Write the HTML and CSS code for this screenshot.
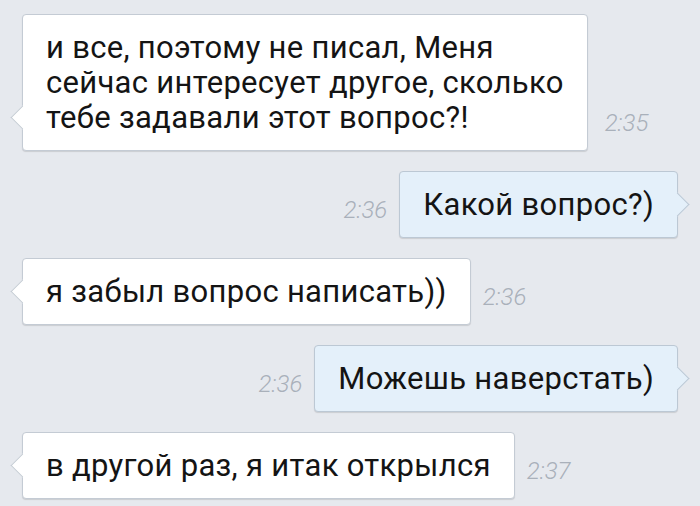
FILE: index.html
```html
<!DOCTYPE html>
<html lang="ru">
<head>
  <meta charset="UTF-8">
  <title>Диалог</title>
  <link rel="stylesheet" href="styles.css">
</head>
<body>
  <div class="chat">
    <!-- incoming -->
    <div class="row in">
      <div class="bubble">и все, поэтому не писал, Меня<br>сейчас интересует другое, сколько<br>тебе задавали этот вопрос?!</div>
      <span class="time t1">2:35</span>
    </div>

    <div class="row out">
      <span class="time">2:36</span>
      <div class="bubble">Какой вопрос?)</div>
    </div>

    <div class="row in">
      <div class="bubble">я забыл вопрос написать))</div>
      <span class="time">2:36</span>
    </div>

    <div class="row out">
      <span class="time">2:36</span>
      <div class="bubble">Можешь наверстать)</div>
    </div>

    <div class="row in">
      <div class="bubble">в другой раз, я итак открылся</div>
      <span class="time">2:37</span>
    </div>
  </div>
</body>
</html>
```

FILE: styles.css
```css
html, body {
  margin: 0;
  padding: 0;
  background-color: #e6e9ee;
}
body {
  font-family: Roboto, "Noto Sans", sans-serif;
  width: 700px;
  height: 506px;
  overflow: hidden;
}
.chat {
  display: flex;
  flex-direction: column;
  gap: 20px;
  padding: 14px 22px 0 22px;
}
.row {
  display: flex;
  align-items: flex-end;
  gap: 12px;
}
.row.out {
  justify-content: flex-end;
}
.bubble {
  position: relative;
  background-color: #fff;
  border: 1px solid #c4cbd4;
  border-radius: 4px;
  box-shadow: 0 1px 1px rgba(0,0,0,0.12);
  padding: 15px 23px;
  font-size: 31px;
  line-height: 35px;
  letter-spacing: 0.3px;
  color: #141414;
  white-space: nowrap;
}
.out .bubble {
  background-color: #e4f0fa;
  border-color: #bcc8d4;
}
/* little tail */
.bubble::before {
  content: "";
  position: absolute;
  bottom: 24px;
  width: 16px;
  height: 16px;
  background: inherit;
  transform: rotate(45deg);
}
.in .bubble::before {
  left: -9px;
  border-left: 1px solid #c4cbd4;
  border-bottom: 1px solid #c4cbd4;
}
.out .bubble::before {
  right: -9px;
  border-right: 1px solid #bcc8d4;
  border-top: 1px solid #bcc8d4;
}
.time {
  font-size: 24px;
  line-height: 26px;
  font-style: italic;
  font-weight: 300;
  color: #a9b0ba;
  margin-bottom: 15px;
}
.t1 {
  margin-left: 5px;
}
```
